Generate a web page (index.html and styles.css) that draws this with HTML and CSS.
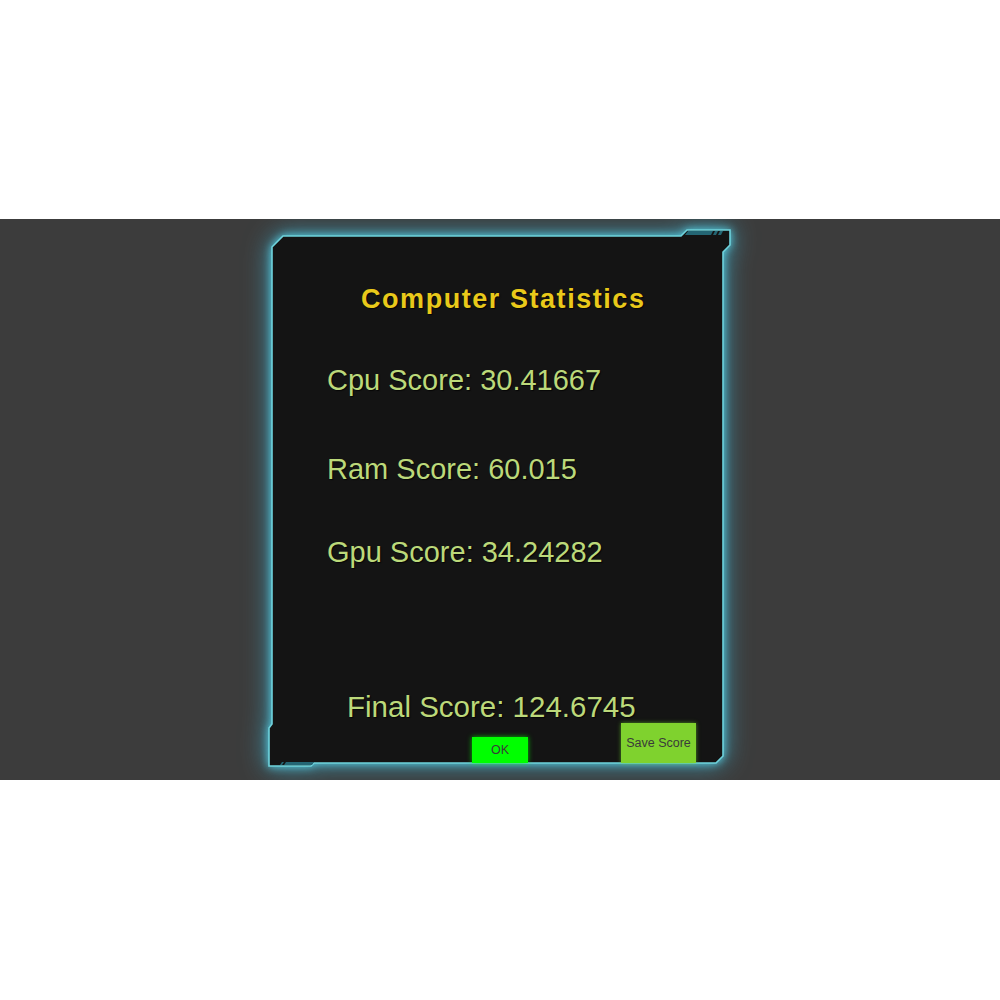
FILE: index.html
```html
<!DOCTYPE html>
<html>
<head>
<meta charset="utf-8">
<title>Computer Statistics</title>
<link rel="stylesheet" href="styles.css">
</head>
<body>
<div class="band">
  <div class="panel">
    <svg class="frame" width="463" height="538" viewBox="0 0 463 538" xmlns="http://www.w3.org/2000/svg">
      <path class="frame-shape" d="M15 7 L413 7 L419 1 L462 1 L462 16 L455 23 L455 527 L448 534 L46 534 L43 537 L1 537 L1 499 L4 495 L4 18 Z"/>
      <polygon class="stripe" points="420,2 445,2 443,6 417,6"/>
      <polygon class="stripe" points="447,2 450,2 448,6 445,6"/>
      <polygon class="stripe" points="452,2 455,2 453,6 450,6"/>
      <polygon class="stripe" points="18,533 46,533 44,536 16,536"/>
      <polygon class="stripe" points="14,533 16,533 14,536 12,536"/>
    </svg>
    <div class="content">
      <h1 class="title">Computer Statistics</h1>
      <p class="stat stat-cpu">Cpu Score: 30.41667</p>
      <p class="stat stat-ram">Ram Score: 60.015</p>
      <p class="stat stat-gpu">Gpu Score: 34.24282</p>
      <p class="stat stat-final">Final Score: 124.6745</p>
      <div class="buttons">
        <button class="btn btn-ok">OK</button>
        <button class="btn btn-save">Save Score</button>
      </div>
    </div>
  </div>
</div>
</body>
</html>
```

FILE: styles.css
```css
html, body {
  margin: 0;
  padding: 0;
  background: #ffffff;
  width: 1000px;
  height: 1000px;
  overflow: hidden;
}

.band {
  margin-top: 219px;
  height: 561px;
  background: #3c3c3c;
  display: flex;
  justify-content: center;
  align-items: flex-start;
  overflow: hidden;
}

.panel {
  position: relative;
  width: 463px;
  height: 538px;
  margin-top: 10px;
  margin-left: -1px;
}

.frame {
  position: absolute;
  left: 0;
  top: 0;
  z-index: 0;
  overflow: visible;
  filter: drop-shadow(0 0 4px rgba(90, 215, 235, 0.9)) drop-shadow(0 0 12px rgba(60, 175, 205, 0.75));
}

.frame-shape {
  fill: #141414;
  stroke: #6fd3dc;
  stroke-width: 1.6;
  stroke-linejoin: miter;
}

.stripe {
  fill: #246674;
}

.content {
  position: relative;
  z-index: 1;
  display: flex;
  flex-direction: column;
  font-family: "Liberation Sans", Arial, sans-serif;
}

.title {
  margin: 57px 0 0 0;
  padding-left: 93px;
  font-size: 27px;
  line-height: 27px;
  font-weight: bold;
  letter-spacing: 1.55px;
  color: #e9c91a;
  text-shadow: 1px 1px 1px rgba(0, 0, 0, 0.7);
}

.stat {
  margin: 0;
  padding-left: 59px;
  font-size: 29px;
  line-height: 29px;
  color: #bcd97a;
  text-shadow: 1px 1px 1px rgba(0, 0, 0, 0.7);
}

.stat-cpu { margin-top: 53px; }
.stat-ram { margin-top: 60px; }
.stat-gpu { margin-top: 54px; }
.stat-final {
  margin-top: 124.5px;
  padding-left: 79px;
  font-size: 29.5px;
  line-height: 29.5px;
}

.buttons {
  display: flex;
  align-items: flex-end;
  gap: 93px;
  padding-left: 204px;
  margin-top: 2px;
  height: 40px;
}

.btn {
  border: none;
  padding: 0;
  margin: 0;
  font-family: "Liberation Sans", Arial, sans-serif;
  font-size: 12.5px;
  color: #3a3a3a;
  display: flex;
  align-items: center;
  justify-content: center;
}

.btn-ok {
  width: 56px;
  height: 26px;
  background: #00ff00;
  box-shadow: 0 0 5px rgba(0, 255, 0, 0.7);
}

.btn-save {
  width: 75px;
  height: 40px;
  background: #7fd22e;
  box-shadow: 0 0 4px rgba(110, 220, 40, 0.6);
}
```
